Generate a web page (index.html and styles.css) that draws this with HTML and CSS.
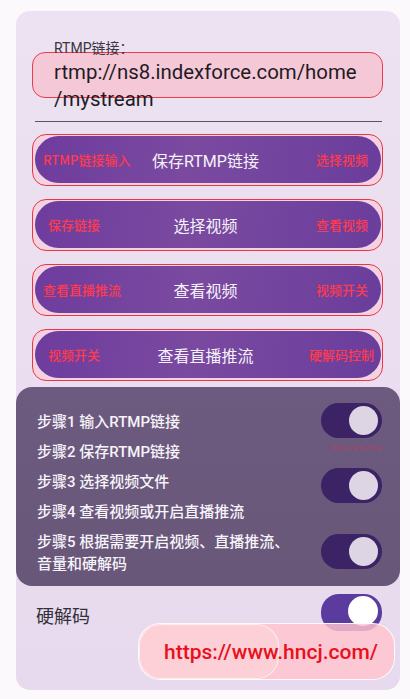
FILE: index.html
```html
<!DOCTYPE html>
<html lang="zh-CN">
<head>
<meta charset="utf-8">
<title>RTMP</title>
<link rel="stylesheet" href="styles.css">
</head>
<body>
<div class="card">
  <div class="input-block">
    <div class="mark-box"></div>
    <div class="label">RTMP链接：</div>
    <div class="url"><span class="url-line">rtmp://ns8.indexforce.com/home</span><span class="url-line">/mystream</span></div>
  </div>
  <div class="divider"></div>
  <div class="buttons">
    <div class="btn-frame"><div class="pill"><span class="side left">RTMP链接输入</span><span class="main">保存RTMP链接</span><span class="side right">选择视频</span></div></div>
    <div class="btn-frame"><div class="pill"><span class="side left l2">保存链接</span><span class="main">选择视频</span><span class="side right">查看视频</span></div></div>
    <div class="btn-frame"><div class="pill"><span class="side left">查看直播推流</span><span class="main">查看视频</span><span class="side right">视频开关</span></div></div>
    <div class="btn-frame"><div class="pill"><span class="side left l4">视频开关</span><span class="main">查看直播推流</span><span class="side right r4">硬解码控制</span></div></div>
  </div>
  <div class="steps">
    <div class="step">步骤1 输入RTMP链接</div>
    <div class="toggle dark"><span class="knob"></span></div>
    <div class="step">步骤2 保存RTMP链接</div>
    <div class="cell-empty"><span class="watermark">https://wap.hncj/</span></div>
    <div class="step">步骤3 选择视频文件</div>
    <div class="toggle dark low"><span class="knob"></span></div>
    <div class="step">步骤4 查看视频或开启直播推流</div>
    <div class="cell-empty"></div>
    <div class="step">步骤5 根据需要开启视频、直播推流、音量和硬解码</div>
    <div class="toggle dark"><span class="knob"></span></div>
  </div>
  <div class="hw-row">
    <span class="hw-label">硬解码</span>
    <div class="toggle bright"><span class="knob"></span></div>
  </div>
  <div class="link-badge"><span class="badge-glow"></span><span class="badge-text">https://www.hncj.com/</span></div>
</div>
</body>
</html>
```
FILE: styles.css
```css
* { box-sizing: border-box; }
html, body { margin: 0; padding: 0; }
body {
  background: #fbf9fc;
  font-family: Roboto, "Noto Sans CJK SC", sans-serif;
  width: 410px;
  height: 699px;
  overflow: hidden;
}
.card {
  position: relative;
  margin: 11px 0 0 16px;
  width: 384px;
  height: 679px;
  border-radius: 14px;
  background: linear-gradient(180deg, #ede2f1 0%, #e9ddef 60%, #e7daee 100%);
  padding-top: 28px;
}
.input-block {
  position: relative;
  padding-left: 38px;
}
.label {
  position: relative;
  font-size: 14px;
  line-height: 18px;
  color: #3a3540;
}
.url {
  position: relative;
  margin-top: 2px;
  font-size: 20.4px;
  line-height: 27px;
  color: #1f1b24;
}
.url-line { display: block; }
.mark-box {
  position: absolute;
  left: 16px;
  top: 13px;
  width: 351px;
  height: 46px;
  border: 1px solid #ef3a4a;
  border-radius: 13px;
  background: rgba(255, 170, 185, 0.45);
}
.divider {
  margin: 8px 18px 0 19px;
  height: 1px;
  background: #5a5560;
}
.buttons {
  margin: 12px 17px 0 16px;
  display: flex;
  flex-direction: column;
  gap: 13px;
}
.btn-frame {
  height: 52px;
  border: 1.5px solid #ee3344;
  border-radius: 14px;
  background: #f3d3e2;
  padding: 1px 1px 2px 2px;
}
.pill {
  height: 100%;
  border-radius: 24px;
  background: linear-gradient(100deg, #6d3c9e 0%, #7a4aa0 45%, #6b3d9c 100%);
  display: grid;
  grid-template-columns: 1fr auto 1fr;
  align-items: center;
  padding: 0 13px 0 8px;
}
.side {
  font-size: 13px;
  font-weight: 500;
  color: #ff3a4c;
  font-family: "Noto Sans CJK SC", sans-serif;
  white-space: nowrap;
}
.left { justify-self: start; }
.l2, .l4 { padding-left: 5px; }
.right { justify-self: end; }
.r4 { margin-right: -6px; }
.main {
  font-size: 16px;
  color: #f6f2fa;
  white-space: nowrap;
}
.steps {
  position: relative;
  margin-top: 6px;
  height: 199px;
  border-radius: 16px;
  background: linear-gradient(180deg, #6c5b7f 0%, #685778 100%);
  padding: 24px 18px 0 21px;
  display: grid;
  grid-template-columns: 262px 1fr;
  row-gap: 8px;
  align-items: center;
  align-content: start;
}
.step {
  font-size: 15px;
  line-height: 22px;
  font-weight: 500;
  color: #f7f3fa;
}
.steps .toggle {
  justify-self: end;
  margin: -9px 0 -5px;
}
.steps .toggle.low {
  margin: -4px 0 -10px;
}
.cell-empty {
  position: relative;
  height: 22px;
}
.watermark {
  position: absolute;
  right: 0;
  top: 3px;
  font-size: 7px;
  font-style: italic;
  white-space: nowrap;
  color: rgba(230, 40, 70, 0.55);
}
.toggle {
  position: relative;
  width: 61px;
  height: 35px;
  border-radius: 18px;
}
.toggle .knob {
  position: absolute;
  right: 4px;
  top: 3px;
  width: 29px;
  height: 29px;
  border-radius: 50%;
}
.toggle.dark { background: #3b2366; }
.toggle.dark .knob { background: #ddd4e4; }
.toggle.bright { background: #5c3b9e; height: 37px; }
.toggle.bright .knob { background: #ffffff; width: 30px; height: 30px; top: 2px; }
.hw-row {
  display: flex;
  justify-content: space-between;
  align-items: center;
  margin-top: 8px;
  padding: 0 18px 0 20px;
}
.hw-label {
  font-size: 18px;
  padding-top: 4px;
  color: #34303a;
  font-family: "Noto Sans CJK SC", sans-serif;
}
.link-badge {
  position: absolute;
  left: 122px;
  top: 612px;
  width: 257px;
  height: 57px;
  border-radius: 22px;
  border: 1px solid rgba(255, 255, 255, 0.9);
  background: rgba(255, 195, 205, 0.82);
  display: flex;
  align-items: center;
  overflow: hidden;
}
.badge-glow {
  position: absolute;
  left: 0;
  top: 0;
  width: 140px;
  height: 100%;
  border-radius: 22px;
  border: 1px solid rgba(255, 255, 255, 0.6);
  background: rgba(255, 215, 222, 0.5);
}
.badge-text {
  position: relative;
  margin-left: 25px;
  font-size: 21px;
  font-weight: 500;
  color: #e8101c;
  font-family: Roboto, sans-serif;
}
```
